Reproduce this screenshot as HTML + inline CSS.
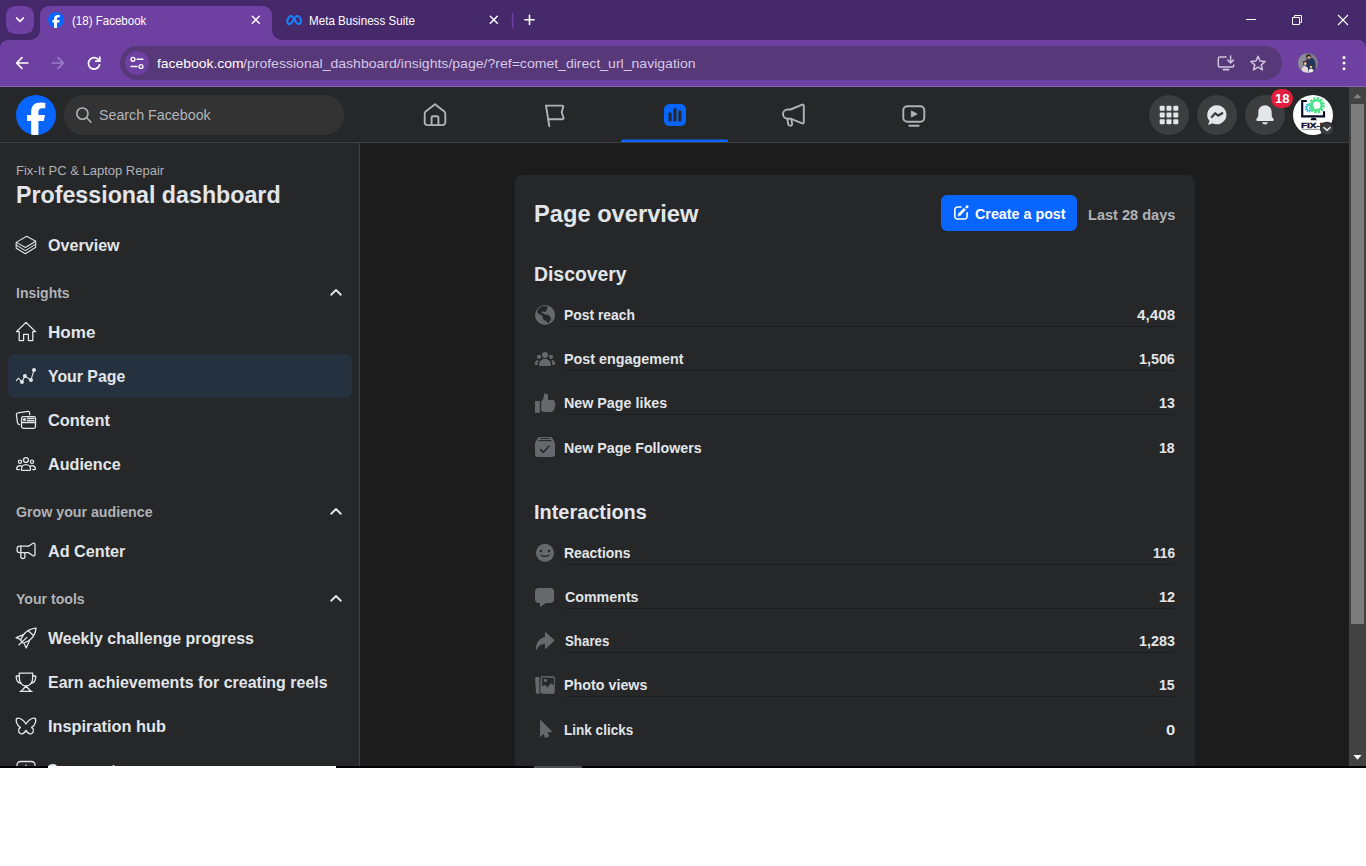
<!DOCTYPE html>
<html>
<head>
<meta charset="utf-8">
<title>(18) Facebook</title>
<style>
*{box-sizing:border-box;margin:0;padding:0}
html,body{width:1366px;height:866px;overflow:hidden;background:#fff;font-family:"Liberation Sans",sans-serif;}
body{position:relative}
.a{position:absolute}
.t{position:absolute;white-space:nowrap;line-height:normal;transform-origin:0 0;font-family:"Liberation Sans",sans-serif}
svg{display:block;overflow:visible;position:absolute;left:0;top:0}
/* browser chrome */
#tabstrip{left:0;top:0;width:1366px;height:52px;background:#46296a}
#toolbar{left:0;top:40px;width:1366px;height:46px;background:#6d40a1;border-radius:8px 8px 0 0}
#chromeline{left:0;top:86px;width:1366px;height:1px;background:#8a63bd}
#tabsearch{left:6px;top:6px;width:28px;height:28px;border-radius:9px;background:#6d40a1}
#tab1{left:40px;top:6px;width:232px;height:36px;background:#6d40a1;border-radius:9px 9px 0 0}
#tab1:before,#tab1:after{content:"";position:absolute;bottom:2px;width:10px;height:10px;background:radial-gradient(circle at 0 0,transparent 9.5px,#6d40a1 10.5px)}
#tab1:before{left:-10px}
#tab1:after{right:-10px;background:radial-gradient(circle at 100% 0,transparent 9.5px,#6d40a1 10.5px)}
#omni{left:120px;top:46px;width:1162px;height:34px;border-radius:17px;background:#573879}
#siteinfo{left:125px;top:51px;width:24px;height:24px;border-radius:12px;background:#6d40a1}
/* facebook */
#page{left:0;top:87px;width:1349px;height:679px;background:#1c1c1d;overflow:hidden}
#fbhead{left:0;top:0;width:1349px;height:55px;background:#252728}
#fbheadline{left:0;top:55px;width:1349px;height:1px;background:#3e4042}
#side{left:0;top:56px;width:359px;height:625px;background:#252728}
#sideline{left:359px;top:56px;width:1px;height:625px;background:#3e4042}
#search{left:64px;top:8px;width:280px;height:40px;border-radius:20px;background:#333334}
#sel{left:8px;top:267px;width:344px;height:44px;border-radius:6px;background:#25313e}
#card{left:515px;top:88px;width:680px;height:640px;border-radius:8px;background:#252728}
.ln{position:absolute;left:50px;width:610px;height:1px;background:#1c1d1e}
#btn{left:426px;top:20px;width:136px;height:36px;border-radius:6px;background:#0866ff}
.cb{position:absolute;width:40px;height:40px;border-radius:20px;background:#3b3d3e;top:8px}
#badge{left:1271px;top:2px;width:22px;height:19px;border-radius:9.5px;background:#e41e3f}
#sbar{left:1349px;top:87px;width:17px;height:679px;background:#424242}
#sthumb{left:1351px;top:104px;width:13px;height:520px;background:#7c7c7c}
#blackline{left:0;top:766px;width:1366px;height:2px;background:#000}
#whitecover{left:0;top:768px;width:1366px;height:98px;background:#fff}
#whitestrip{left:48px;top:766px;width:288px;height:2px;background:#fff}
#graystrip{left:534px;top:766px;width:48px;height:2px;background:#4a4c4f}
</style>
</head>
<body>
<!-- ===== Browser chrome ===== -->
<div id="tabstrip" class="a"></div>
<div id="toolbar" class="a"></div>
<div id="chromeline" class="a"></div>
<div id="tabsearch" class="a"></div>
<div id="tab1" class="a"></div>
<div id="omni" class="a"></div>
<div id="siteinfo" class="a"></div>

<!-- ===== Facebook page ===== -->
<div id="page" class="a">
  <div id="side" class="a"></div>
  <div id="sel" class="a"></div>
  <div id="sideline" class="a"></div>
  <div id="card" class="a">
    <div id="btn" class="a"></div>
    <div class="ln" style="top:151px"></div>
    <div class="ln" style="top:195px"></div>
    <div class="ln" style="top:239px"></div>
    <div class="ln" style="top:389px"></div>
    <div class="ln" style="top:433px"></div>
    <div class="ln" style="top:477px"></div>
    <div class="ln" style="top:521px"></div>
  </div>
  <div id="fbhead" class="a">
    <div id="search" class="a"></div>
    <div class="cb" style="left:1149px"></div>
    <div class="cb" style="left:1197px"></div>
    <div class="cb" style="left:1245px"></div>
    <div class="cb" style="left:1293px;background:#fff"></div>
  </div>
  <div id="fbheadline" class="a"></div>
  <div id="badge" class="a"></div>
</div>
<div id="sbar" class="a"></div>
<div id="sthumb" class="a"></div>

<!-- ===== Text ===== -->
<span class="t" style="left:71.93px;top:14px;font-size:12.0px;font-weight:400;color:#ffffff;transform:scaleX(0.9612)">(18) Facebook</span>
<span class="t" style="left:309.21px;top:14px;font-size:12.0px;font-weight:400;color:#ffffff;transform:scaleX(0.9686)">Meta Business Suite</span>
<span class="t" style="left:157.13px;top:56px;font-size:13.1px;font-weight:400;color:#ffffff;transform:scaleX(1.0621)">facebook.com</span>
<span class="t" style="left:243.40px;top:56px;font-size:13.1px;font-weight:400;color:#d6c9e6;transform:scaleX(1.0729)">/professional_dashboard/insights/page/?ref=comet_direct_url_navigation</span>
<span class="t" style="left:99.29px;top:106px;font-size:15.2px;font-weight:400;color:#b0b3b8;transform:scaleX(0.9382)">Search Facebook</span>
<span class="t" style="left:1274.83px;top:92px;font-size:12.6px;font-weight:700;color:#ffffff;transform:scaleX(1.0308)">18</span>
<span class="t" style="left:15.63px;top:163px;font-size:12.9px;font-weight:400;color:#b0b3b8;transform:scaleX(1.0088)">Fix-It PC &amp; Laptop Repair</span>
<span class="t" style="left:15.51px;top:182px;font-size:23.5px;font-weight:700;color:#e2e5e9;transform:scaleX(0.9884)">Professional dashboard</span>
<span class="t" style="left:48.08px;top:236px;font-size:16.6px;font-weight:700;color:#e2e5e9;transform:scaleX(0.9704)">Overview</span>
<span class="t" style="left:15.50px;top:284px;font-size:15.2px;font-weight:700;color:#b0b3b8;transform:scaleX(0.9216)">Insights</span>
<span class="t" style="left:47.53px;top:323px;font-size:16.6px;font-weight:700;color:#e2e5e9;transform:scaleX(1.0303)">Home</span>
<span class="t" style="left:48.21px;top:367px;font-size:16.6px;font-weight:700;color:#e2e5e9;transform:scaleX(0.9550)">Your Page</span>
<span class="t" style="left:47.53px;top:411px;font-size:16.6px;font-weight:700;color:#e2e5e9;transform:scaleX(0.9877)">Content</span>
<span class="t" style="left:47.64px;top:455px;font-size:16.6px;font-weight:700;color:#e2e5e9;transform:scaleX(0.9731)">Audience</span>
<span class="t" style="left:16.33px;top:503px;font-size:15.2px;font-weight:700;color:#b0b3b8;transform:scaleX(0.9352)">Grow your audience</span>
<span class="t" style="left:47.69px;top:542px;font-size:16.6px;font-weight:700;color:#e2e5e9;transform:scaleX(0.9762)">Ad Center</span>
<span class="t" style="left:16.27px;top:590px;font-size:15.2px;font-weight:700;color:#b0b3b8;transform:scaleX(0.9288)">Your tools</span>
<span class="t" style="left:47.78px;top:629px;font-size:16.6px;font-weight:700;color:#e2e5e9;transform:scaleX(0.9640)">Weekly challenge progress</span>
<span class="t" style="left:47.98px;top:673px;font-size:16.6px;font-weight:700;color:#e2e5e9;transform:scaleX(0.9624)">Earn achievements for creating reels</span>
<span class="t" style="left:47.95px;top:717px;font-size:16.6px;font-weight:700;color:#e2e5e9;transform:scaleX(0.9842)">Inspiration hub</span>
<span class="t" style="left:47.33px;top:761px;font-size:16.6px;font-weight:700;color:#e2e5e9;transform:scaleX(0.9000)">Comments manager</span>
<span class="t" style="left:534.29px;top:201px;font-size:23.5px;font-weight:700;color:#e2e5e9;transform:scaleX(1.0071)">Page overview</span>
<span class="t" style="left:975.03px;top:205px;font-size:15.2px;font-weight:700;color:#ffffff;transform:scaleX(0.9414)">Create a post</span>
<span class="t" style="left:1088.34px;top:206px;font-size:15.2px;font-weight:700;color:#b0b3b8;transform:scaleX(0.9587)">Last 28 days</span>
<span class="t" style="left:534.31px;top:263px;font-size:19.6px;font-weight:700;color:#e2e5e9;transform:scaleX(0.9888)">Discovery</span>
<span class="t" style="left:563.66px;top:306px;font-size:15.2px;font-weight:700;color:#e2e5e9;transform:scaleX(0.9147)">Post reach</span>
<span class="t" style="left:563.73px;top:350px;font-size:15.2px;font-weight:700;color:#e2e5e9;transform:scaleX(0.9447)">Post engagement</span>
<span class="t" style="left:563.96px;top:394px;font-size:15.2px;font-weight:700;color:#e2e5e9;transform:scaleX(0.9404)">New Page likes</span>
<span class="t" style="left:563.85px;top:439px;font-size:15.2px;font-weight:700;color:#e2e5e9;transform:scaleX(0.9375)">New Page Followers</span>
<span class="t" style="left:1136.91px;top:306px;font-size:15.2px;font-weight:700;color:#e2e5e9;transform:scaleX(1.0040)">4,408</span>
<span class="t" style="left:1139.36px;top:350px;font-size:15.2px;font-weight:700;color:#e2e5e9;transform:scaleX(0.9425)">1,506</span>
<span class="t" style="left:1159.11px;top:394px;font-size:15.2px;font-weight:700;color:#e2e5e9;transform:scaleX(0.9379)">13</span>
<span class="t" style="left:1159.15px;top:439px;font-size:15.2px;font-weight:700;color:#e2e5e9;transform:scaleX(0.9291)">18</span>
<span class="t" style="left:533.96px;top:501px;font-size:19.6px;font-weight:700;color:#e2e5e9;transform:scaleX(1.0160)">Interactions</span>
<span class="t" style="left:563.98px;top:544px;font-size:15.2px;font-weight:700;color:#e2e5e9;transform:scaleX(0.9169)">Reactions</span>
<span class="t" style="left:564.61px;top:588px;font-size:15.2px;font-weight:700;color:#e2e5e9;transform:scaleX(0.9370)">Comments</span>
<span class="t" style="left:564.81px;top:632px;font-size:15.2px;font-weight:700;color:#e2e5e9;transform:scaleX(0.8760)">Shares</span>
<span class="t" style="left:563.51px;top:676px;font-size:15.2px;font-weight:700;color:#e2e5e9;transform:scaleX(0.9414)">Photo views</span>
<span class="t" style="left:563.90px;top:721px;font-size:15.2px;font-weight:700;color:#e2e5e9;transform:scaleX(0.8919)">Link clicks</span>
<span class="t" style="left:1153.06px;top:544px;font-size:15.2px;font-weight:700;color:#e2e5e9;transform:scaleX(0.9020)">116</span>
<span class="t" style="left:1159.25px;top:588px;font-size:15.2px;font-weight:700;color:#e2e5e9;transform:scaleX(0.9495)">12</span>
<span class="t" style="left:1139.25px;top:632px;font-size:15.2px;font-weight:700;color:#e2e5e9;transform:scaleX(0.9479)">1,283</span>
<span class="t" style="left:1159.47px;top:676px;font-size:15.2px;font-weight:700;color:#e2e5e9;transform:scaleX(0.9290)">15</span>
<span class="t" style="left:1166.35px;top:721px;font-size:15.2px;font-weight:700;color:#e2e5e9;transform:scaleX(1.0900)">0</span>
<!-- ===== Icons overlay (page coordinates) ===== -->
<svg width="1366" height="866" viewBox="0 0 1366 866">
<!-- ---- chrome: tab strip ---- -->
<g fill="none" stroke="#fff" stroke-linecap="round" stroke-linejoin="round">
  <path d="M16.600 18 L20 21.400 L23.400 18" stroke-width="1.700"/>
  <path d="M252.300 16.300 l7 7 M259.300 16.300 l-7 7" stroke-width="1.450"/>
  <path d="M490.300 16.300 l7 7 M497.300 16.300 l-7 7" stroke-width="1.450"/>
  <path d="M524.900 19.800 h9.200 M529.500 15.200 v9.200" stroke-width="1.600"/>
  <path d="M1246 19.5 h10" stroke-width="1" stroke-linecap="butt"/>
  <path d="M1292.500 17.500 h7 v7 h-7 z M1294.500 17.500 v-2 h7 v7 h-2" stroke-width="1" stroke-linejoin="round" stroke-linecap="butt"/>
  <path d="M1338 15 l10 10 M1348 15 l-10 10" stroke-width="1.1" stroke-linecap="butt"/>
</g>
<path d="M512.6 13.5 v14.5" stroke="#6d40a1" stroke-width="1.6" stroke-linecap="round" fill="none"/>
<!-- fb favicon -->
<g transform="translate(48 12) scale(0.4444)">
  <circle cx="18" cy="18" r="18" fill="#0866ff"/>
  <path fill="#fff" d="M13.651 35.471v-11.97H9.936V18h3.715v-2.37c0-6.127 2.772-8.964 8.784-8.964 1.138 0 3.103.223 3.91.446v4.983c-.425-.043-1.167-.065-2.081-.065-2.952 0-4.09 1.116-4.09 4.025V18h5.883l-1.008 5.5h-4.867v12.37a18.183 18.183 0 0 1-6.53-.399Z"/>
</g>
<!-- meta logo -->
<path d="M287.3 21.4 C287.3 18.2 289.2 16.1 291 16.1 C294.2 16.1 295.6 24 298.6 24 C300.3 24 300.9 22.6 300.9 21 C300.9 18.3 299.3 16.1 297.4 16.1 C294.4 16.1 292.6 24 289.6 24 C288.2 24 287.3 23 287.3 21.4 Z" fill="none" stroke="#1683ff" stroke-width="2" stroke-linejoin="round"/>
<!-- ---- chrome: toolbar ---- -->
<g fill="none" stroke="#fff" stroke-width="1.7" stroke-linecap="round" stroke-linejoin="round">
  <path d="M27.8 63 H16.8 M22 57.6 L16.6 63 L22 68.4"/>
  <path d="M52.2 63 H63.2 M58 57.6 L63.4 63 L58 68.4" stroke="#9b7dc5"/>
  <path d="M99.3 61 A5.7 5.7 0 1 0 99.6 64.8"/>
  <path d="M99.8 57.2 V61.2 H95.8" stroke-linejoin="miter"/>
</g>
<!-- tune icon -->
<g fill="none" stroke="#fff" stroke-width="1.4" stroke-linecap="round">
  <circle cx="133" cy="59.3" r="1.9"/><path d="M137 59.3 H143"/>
  <circle cx="141" cy="66.5" r="1.9"/><path d="M131 66.5 H137"/>
</g>
<!-- install icon -->
<g fill="none" stroke="#cfc5de" stroke-width="1.5" stroke-linecap="round" stroke-linejoin="round">
  <path d="M1226 57 H1220 a1.7 1.7 0 0 0 -1.7 1.7 V65.4 a1.7 1.7 0 0 0 1.7 1.7 H1232 a1.7 1.7 0 0 0 1.7 -1.7 V65"/>
  <path d="M1222.7 69.6 H1229.3" stroke-width="1.8" stroke-linecap="butt"/>
  <path d="M1230.6 56 V62.6 M1227.7 60 L1230.6 62.9 L1233.5 60"/>
</g>
<!-- star -->
<path d="M1258 56.3 l2.05 4.7 5.1 .45 -3.87 3.37 1.16 5 -4.44 -2.66 -4.44 2.66 1.16 -5 -3.87 -3.37 5.1 -.45 z" fill="none" stroke="#cfc5de" stroke-width="1.5" stroke-linejoin="round"/>
<!-- profile avatar (family photo) -->
<defs><clipPath id="avc"><circle cx="1308" cy="63" r="10"/></clipPath></defs>
<g clip-path="url(#avc)">
  <rect x="1298" y="53" width="20" height="20" fill="#7f7d8c"/>
  <rect x="1298" y="53" width="7" height="20" fill="#8e8c99"/>
  <path d="M1306 73 V62 q0 -4 4 -4.5 q5 .5 5.5 6 V73 z" fill="#26355c"/>
  <circle cx="1308.6" cy="56.6" r="2.3" fill="#2a2326"/>
  <circle cx="1309" cy="57.6" r="1.6" fill="#c99b84"/>
  <circle cx="1305" cy="63" r="2.2" fill="#3a2a2a"/>
  <circle cx="1305.2" cy="63.6" r="1.5" fill="#e3b9a5"/>
  <path d="M1302 73 v-5 q3 -3.5 6 0 v5 z" fill="#e9d6dc"/>
  <circle cx="1311" cy="66.5" r="1.9" fill="#3a2a2a"/>
  <circle cx="1311" cy="67" r="1.3" fill="#e3b9a5"/>
  <path d="M1308.5 73 v-3 q2.5 -2.5 5 0 v3 z" fill="#f1ece8"/>
</g>
<!-- menu dots -->
<g fill="#fff"><circle cx="1344" cy="57.6" r="1.5"/><circle cx="1344" cy="63.1" r="1.5"/><circle cx="1344" cy="68.7" r="1.5"/></g>

<!-- ---- fb header ---- -->
<g transform="translate(16 95) scale(1.1111)">
  <circle cx="18" cy="18" r="18" fill="#0866ff"/>
  <path fill="#fff" d="M13.651 35.471v-11.97H9.936V18h3.715v-2.37c0-6.127 2.772-8.964 8.784-8.964 1.138 0 3.103.223 3.91.446v4.983c-.425-.043-1.167-.065-2.081-.065-2.952 0-4.09 1.116-4.09 4.025V18h5.883l-1.008 5.500h-4.867v12.37a18.183 18.183 0 0 1-6.53-.399Z"/>
</g>
<!-- search magnifier -->
<g fill="none" stroke="#b0b3b8" stroke-width="1.6" stroke-linecap="round"><circle cx="82.4" cy="113.6" r="5.6"/><path d="M86.6 117.8 L91 122.2"/></g>
<!-- nav: home -->
<g fill="none" stroke="#b0b3b8" stroke-width="1.9" stroke-linejoin="round" stroke-linecap="round">
  <path d="M435 104.3 L425.7 111.4 a2.6 2.6 0 0 0 -1 2 V122.3 a2.8 2.8 0 0 0 2.8 2.8 H442.5 a2.8 2.8 0 0 0 2.8 -2.8 V113.4 a2.6 2.6 0 0 0 -1 -2 Z"/>
  <path d="M431.6 125 V117.6 a1.4 1.4 0 0 1 1.4 -1.4 H437 a1.4 1.4 0 0 1 1.4 1.4 V125"/>
  <!-- flag -->
  <path d="M546 105.6 L549.3 126.2"/>
  <path d="M546 105.6 H562.4 a.9 .9 0 0 1 .85 1.2 L561.7 112.3 L563.6 118 a.9 .9 0 0 1 -.85 1.2 H548.2"/>
  <!-- megaphone -->
  <path d="M790.5 109.5 H787.600 a4.600 4.600 0 0 0 0 9.200 H790.500 L802.300 123.400 a1.100 1.100 0 0 0 1.500 -1 V105.600 a1.100 1.100 0 0 0 -1.500 -1 Z"/>
  <path d="M787.3 118.7 L788.3 124.3 a1.6 1.6 0 0 0 1.6 1.3 h.6 a1.6 1.6 0 0 0 1.6 -1.9 L791.3 119"/>
  <!-- watch -->
  <rect x="903.3" y="106.2" width="21" height="15.6" rx="4"/>
  <path d="M909.3 125.7 H918.7"/>
</g>
<path d="M911.3 110.9 L917.2 114 L911.3 117.1 Z" fill="#b0b3b8" stroke="#b0b3b8" stroke-width=".8" stroke-linejoin="round"/>
<!-- nav: insights active -->
<rect x="664" y="104" width="22" height="22" rx="5.5" fill="#0866ff"/>
<g fill="#252728"><rect x="668.6" y="112.6" width="3" height="9" rx=".8"/><rect x="673.5" y="108.2" width="3" height="13.4" rx=".8"/><rect x="678.4" y="110.6" width="3" height="11" rx=".8"/></g>
<path d="M621 142 V141 a1.5 1.5 0 0 1 1.5 -1.5 H726.5 a1.5 1.5 0 0 1 1.5 1.5 V142 Z" fill="#0866ff"/>
<!-- right: grid -->
<g fill="#e2e5e9">
  <rect x="1159.7" y="105.7" width="5" height="5" rx="1"/><rect x="1166.5" y="105.7" width="5" height="5" rx="1"/><rect x="1173.3" y="105.7" width="5" height="5" rx="1"/>
  <rect x="1159.7" y="112.5" width="5" height="5" rx="1"/><rect x="1166.5" y="112.5" width="5" height="5" rx="1"/><rect x="1173.3" y="112.5" width="5" height="5" rx="1"/>
  <rect x="1159.7" y="119.3" width="5" height="5" rx="1"/><rect x="1166.5" y="119.3" width="5" height="5" rx="1"/><rect x="1173.3" y="119.3" width="5" height="5" rx="1"/>
</g>
<!-- messenger -->
<path d="M1217 105.3 a9.8 9.5 0 0 0 -7.4 15.7 L1208.3 124 a.6 .6 0 0 0 .8 .8 L1212.3 123.3 a9.8 9.5 0 1 0 4.7 -18 Z" fill="#e2e5e9"/>
<path d="M1211.8 117 L1215.2 113.3 L1218.3 115.6 L1222.2 113.2" fill="none" stroke="#3b3d3e" stroke-width="2.300" stroke-linecap="round" stroke-linejoin="round"/>
<!-- bell -->
<path d="M1265 105.3 c-4 0 -6.7 3 -6.7 6.9 v2.8 c0 1.4 -.8 2.7 -1.8 4 c-.6 .8 -.1 1.9 .9 1.9 h15.2 c1 0 1.5 -1.1 .9 -1.9 c-1 -1.3 -1.8 -2.6 -1.8 -4 v-2.800 c0 -3.900 -2.700 -6.900 -6.700 -6.900 Z M1262 122.2 a3.100 3.100 0 0 0 6 0 Z" fill="#e2e5e9"/>
<!-- page avatar -->
<defs><clipPath id="pgc"><circle cx="1313" cy="115" r="20"/></clipPath></defs>
<g clip-path="url(#pgc)">
  <path d="M1306.800 101 H1302.200 V116.400 H1324 V111.300" fill="none" stroke="#0b0b28" stroke-width="2.200" stroke-linejoin="miter"/>
  <path d="M1310.300 120.300 h6.600 l-1.500 -2.600 h-3.600 z" fill="#0b0b28"/>
  <circle cx="1309.300" cy="107.800" r="3.700" fill="none" stroke="#35bfe0" stroke-width="2" stroke-dasharray="1.450 .870"/>
  <circle cx="1309.300" cy="107.800" r="2.700" fill="none" stroke="#35bfe0" stroke-width="1.500"/>
  <circle cx="1316.600" cy="105.300" r="7" fill="none" stroke="#4be38a" stroke-width="2.400" stroke-dasharray="2.300 1.370"/>
  <circle cx="1316.600" cy="105.300" r="5.100" fill="none" stroke="#4be38a" stroke-width="2.600"/>
  <text x="1301" y="127.900" font-family="Liberation Sans, sans-serif" font-weight="700" font-size="7.600" fill="#0b0b28" stroke="#0b0b28" stroke-width=".350" textLength="27.500" lengthAdjust="spacingAndGlyphs">FIX-IT</text>
  <path d="M1302 129.400 h22" stroke="#777" stroke-width=".800"/>
</g>
<circle cx="1327" cy="128.800" r="7" fill="#252728"/>
<circle cx="1327" cy="128.800" r="6" fill="#3b3d3e"/>
<path d="M1324 127.600 L1327 130.400 L1330 127.600" fill="none" stroke="#e2e5e9" stroke-width="1.500" stroke-linecap="round" stroke-linejoin="round"/>
<!-- scrollbar arrows -->
<path d="M1357.500 94 L1361.500 98.200 H1353.500 Z" fill="#858585"/>
<path d="M1353.500 755 H1361.500 L1357.500 759.800 Z" fill="#fff"/>
<!-- ---- sidebar icons ---- -->
<g fill="none" stroke="#e2e5e9" stroke-width="1.3" stroke-linejoin="round" stroke-linecap="round">
  <!-- overview layers -->
  <path d="M26.700 236.300 L35.700 241.300 L25.400 247.500 L16.200 242.400 Z" stroke-width="1.050"/>
  <path d="M16.200 242.400 V248.200 L25.400 253.800 L35.700 247.300 V241.300" stroke-width="1.050"/>
  <path d="M16.200 245.100 L25.400 250.600 L35.700 244.100" stroke-width="1.050"/>
  <!-- home -->
  <path d="M26 322.400 L16.400 331.700 H19.200 V340.600 H23.600 V334.400 H28.400 V340.600 H32.800 V331.700 H35.600 Z"/>
  <!-- your page -->
  <path d="M16.300 380.600 L18.500 378.200 L21.950 382 L24.900 375.950 L30.950 380.100 L34 369.950" stroke-width="1.100"/>
  <!-- content -->
  <path d="M19.700 424.600 C18.300 424.500 17.600 423.800 17.450 422.700 L16.400 414.700 C16.300 413.500 17 412.900 18 412.800 L28 411.450 C29 411.400 29.600 412 29.600 413 V414.700"/>
  <rect x="21.550" y="416.600" width="13.950" height="11.800" rx="1.800"/>
  <path d="M21.550 422.500 H35.500 M27.200 418.500 H33.900 M27.200 420.600 H33.900"/>
  <!-- audience -->
  <circle cx="25.950" cy="460" r="2.450"/>
  <path d="M21.400 469.600 C21.400 466.600 23.400 464.600 26 464.600 C28.600 464.600 30.600 466.600 30.600 469.600 a.800 .800 0 0 1 -.800 .800 H22.200 a.800 .800 0 0 1 -.800 -.800 Z"/>
  <circle cx="20" cy="461.700" r="1.600"/>
  <circle cx="32" cy="461.700" r="1.600"/>
  <path d="M19.300 469.600 H17.400 a.800 .800 0 0 1 -.800 -.900 C16.800 466.900 18.300 465.600 20 465.600 C20.700 465.600 21.300 465.800 21.800 466.200"/>
  <path d="M32.700 469.600 H34.600 a.800 .800 0 0 0 .800 -.900 C35.200 466.900 33.700 465.600 32 465.600 C31.300 465.600 30.700 465.800 30.200 466.200"/>
  <!-- ad center megaphone -->
  <path d="M28.400 546.200 H19.500 a2.400 2.400 0 0 0 -2.400 2.400 V550.200 a2.400 2.400 0 0 0 2.400 2.400 H28.400"/>
  <path d="M28.400 546.200 L33 543.300 a1.300 1.300 0 0 1 2 1.100 V554.600 a1.300 1.300 0 0 1 -2 1.100 L28.400 552.600"/>
  <path d="M20.800 546.200 V556.600 a2.050 2.050 0 0 0 4.100 0 V552.600"/>
  <!-- chevrons -->
  <path d="M331.200 294.700 L336 290 L340.800 294.700" stroke-width="1.900"/>
  <path d="M331.200 513.700 L336 509 L340.800 513.700" stroke-width="1.900"/>
  <path d="M331.200 600.700 L336 596 L340.800 600.700" stroke-width="1.900"/>
  <!-- rocket -->
  <path d="M36.100 628.100 C31 628.600 27 630.600 24.500 633.500 C22.500 636 21 638.500 20.600 640.300 L23.400 643.200 C25.500 642.800 28 641.600 30.300 639.600 C33.300 637 35.500 633 36.100 628.100 Z"/>
  <path d="M28 630.600 L33.500 635.400"/>
  <path d="M22.900 634.900 L16.100 637.600 L20.300 639.400"/>
  <path d="M29.400 640.900 L26.200 647.900 L24.400 644"/>
  <path d="M26.900 637.400 L19 644.800"/>
  <!-- trophy -->
  <path d="M19.300 673.200 H32.700 V678 C32.700 683 29.500 686 26 686 C22.500 686 19.300 683 19.300 678 Z"/>
  <path d="M19.300 676 H16.800 a.600 .600 0 0 0 -.600 .600 C16.200 680.500 18.500 683 21 683.400"/>
  <path d="M32.700 676 H35.200 a.600 .600 0 0 1 .600 .600 C35.800 680.500 33.500 683 31 683.400"/>
  <path d="M26 686 L21.200 691.200 M26 686 L30.800 691.200 M20 691.400 H32"/>
  <!-- butterfly -->
  <path d="M26 724 C24 720.500 20 717.500 17.500 718.200 C15.200 719 16 724.500 20.500 727.600 C17.800 728.600 18 732.500 20.500 733.600 C22.800 734.500 25 732.300 26 730.400 C27 732.300 29.200 734.500 31.500 733.600 C34 732.500 34.200 728.600 31.500 727.600 C36 724.500 36.800 719 34.500 718.200 C32 717.500 28 720.500 26 724 Z"/>
  <!-- partial next icon -->
  <path d="M17 768 V765 a3.500 3.500 0 0 1 3.500 -3.500 H31.500 a3.500 3.500 0 0 1 3.500 3.500 V768"/>
</g>
<g fill="#e2e5e9">
  <circle cx="21.950" cy="382" r="2"/><circle cx="24.900" cy="375.950" r="2"/><circle cx="30.950" cy="380.100" r="2"/><circle cx="34" cy="369.950" r="2"/>
  <circle cx="24.400" cy="419.500" r="1.550"/>
  <circle cx="26" cy="765.200" r=".800"/>
</g>
<!-- ---- card icons ---- -->
<g fill="#65686c">
  <!-- globe -->
  <circle cx="545.050" cy="315" r="10.050"/>
  <!-- people -->
  <circle cx="545" cy="355" r="3.050"/>
  <path d="M539 364.500 a6 5.650 0 0 1 12 0 v.300 a1.200 1.200 0 0 1 -1.200 1.200 h-9.600 a1.200 1.200 0 0 1 -1.200 -1.200 z"/>
  <circle cx="539" cy="356.800" r="2.150"/>
  <circle cx="551" cy="356.800" r="2.150"/>
  <path d="M538.600 360 C536 360 534.800 362 534.800 363.800 a1.300 1.300 0 0 0 1.300 1.300 H537.800 C537.600 363 537.800 361.500 538.600 360 Z"/>
  <path d="M551.400 360 C554 360 555.200 362 555.200 363.800 a1.300 1.300 0 0 1 -1.300 1.300 H552.200 C552.400 363 552.200 361.500 551.400 360 Z"/>
  <!-- thumb -->
  <rect x="535" y="401" width="4.850" height="11.800" rx=".600"/>
  <path d="M541.100 402 L543.200 399 C543.800 397.500 544 396 544 394.800 C544 393.900 544.700 393.600 545.300 393.600 C547 393.600 548 394.800 548 396.500 C548 397.800 548 399 548.200 400.100 H553 a1.700 1.700 0 0 1 1.500 2.500 a1.700 1.700 0 0 1 .300 2.700 a1.600 1.600 0 0 1 -.600 2.700 a1.600 1.600 0 0 1 -1 2.500 C553.200 411.300 552.500 411.900 551.500 411.900 H544 C542.500 411.900 541.100 411 541.100 410 Z"/>
  <!-- followers box -->
  <path d="M539.500 437 H550.500 C551.500 437 552 437.500 552.500 438.500 L554.400 441.800 C554.800 442.500 555 443.300 555 444 V454 a3 3 0 0 1 -3 3 H538 a3 3 0 0 1 -3 -3 V444 C535 443.300 535.200 442.500 535.600 441.800 L537.500 438.500 C538 437.500 538.500 437 539.500 437 Z"/>
  <!-- smiley -->
  <circle cx="545" cy="552.900" r="9.100"/>
  <!-- comment -->
  <path d="M538.800 587.900 H550.300 a3.800 3.800 0 0 1 3.800 3.800 V599.200 a3.800 3.800 0 0 1 -3.800 3.800 H545.900 L540.700 606.800 a.500 .500 0 0 1 -.800 -.400 V603 H538.800 a3.800 3.800 0 0 1 -3.800 -3.800 V591.700 a3.800 3.800 0 0 1 3.800 -3.800 Z"/>
  <!-- share -->
  <path d="M544.900 632.600 a.500 .500 0 0 1 .850 -.350 L554.400 640 a.500 .500 0 0 1 0 .750 L545.750 648.800 a.500 .500 0 0 1 -.850 -.350 V643.850 C541 643.850 538.500 646 536.500 649.700 a.400 .400 0 0 1 -.750 -.150 C536 642 540 637.500 544.900 636.900 Z"/>
  <!-- photo -->
  <path d="M536.700 677.100 L539.400 676.900 V693.900 L537.200 693.700 a1.300 1.300 0 0 1 -1.200 -1.200 L535.100 678.700 a1.500 1.500 0 0 1 1.600 -1.600 Z"/>
  <rect x="540.500" y="676.100" width="14.400" height="17.800" rx="2.200" transform="rotate(1.500 547.700 685)"/>
  <!-- cursor -->
  <path d="M540.050 720.300 V736.500 a.400 .400 0 0 0 .700 .300 L543.300 733.700 L545 737.500 a.500 .500 0 0 0 .650 .250 L549 736.400 a.500 .500 0 0 0 .250 -.650 L547.600 732.300 H551.700 a.400 .400 0 0 0 .300 -.700 L540.750 720 a.400 .400 0 0 0 -.700 .300 Z"/>
</g>
<g fill="#252728">
  <!-- globe continents -->
  <path d="M547.670 306.750 L546.280 310.050 L545.760 311.600 L542.640 311.260 L541.080 311.950 L541.260 312.990 L543.860 313.860 L545.240 314.900 L546.970 314.720 L548.700 315.590 L550.780 317.670 L550.260 320.090 L548.880 322.170 L547.840 323.030 L546.970 321.480 L545.760 320.440 L543.860 319.740 L542.990 318.360 L542.640 316.280 L541.780 314.900 L539.700 314.200 L538.140 313.160 L537.450 311.080 L538.660 308.830 L541.430 306.750 L544.550 306.170 Z" stroke="#252728" stroke-width=".500" stroke-linejoin="round"/>
  <!-- followers: lid lines + check -->
  <path d="M540.300 438.500 H549.700" fill="none" stroke="#252728" stroke-width=".900"/>
  <path d="M538.400 440.600 H551.600" fill="none" stroke="#252728" stroke-width="1"/>
  <path d="M540.600 449.600 L543.400 452.300 L549 446.200" fill="none" stroke="#252728" stroke-width="1.600" stroke-linecap="round" stroke-linejoin="round"/>
  <!-- smiley face -->
  <circle cx="541" cy="550.900" r="1.250"/><circle cx="549" cy="550.900" r="1.250"/>
  <path d="M541.200 555.200 Q545 557.700 548.800 555.200" fill="none" stroke="#252728" stroke-width="1.250" stroke-linecap="round"/>
  <!-- photo sky -->
  <path d="M542.300 677.600 L553.800 678.200 L553.700 685 L550.800 682.900 L547.700 687.300 L545 684.700 L542.300 686.100 Z" stroke="#252728" stroke-width=".400" stroke-linejoin="round"/>
</g>
<circle cx="545.500" cy="680.400" r="1.650" fill="#65686c"/>
<!-- create-a-post icon -->
<g fill="none" stroke="#fff" stroke-linecap="round" stroke-linejoin="round">
  <path d="M961 207 H957.450 a2.600 2.600 0 0 0 -2.600 2.600 V216.400 a2.600 2.600 0 0 0 2.600 2.600 H964.500 a2.600 2.600 0 0 0 2.600 -2.600 V212.800" stroke-width="1.600"/>
  <path d="M959.600 214.200 L964.900 208.900" stroke-width="2.700" stroke-linecap="butt"/>
  <path d="M958 215.700 L958.700 213.200 L960.500 215 Z" fill="#fff" stroke-width=".600"/>
  <path d="M966.600 207.200 L967.300 206.500" stroke-width="2.500"/>
</g>
</svg>
<!-- ===== bottom edge ===== -->
<div id="blackline" class="a"></div>
<div id="whitestrip" class="a"></div>
<div id="graystrip" class="a"></div>
<div id="whitecover" class="a"></div>

</body>
</html>
